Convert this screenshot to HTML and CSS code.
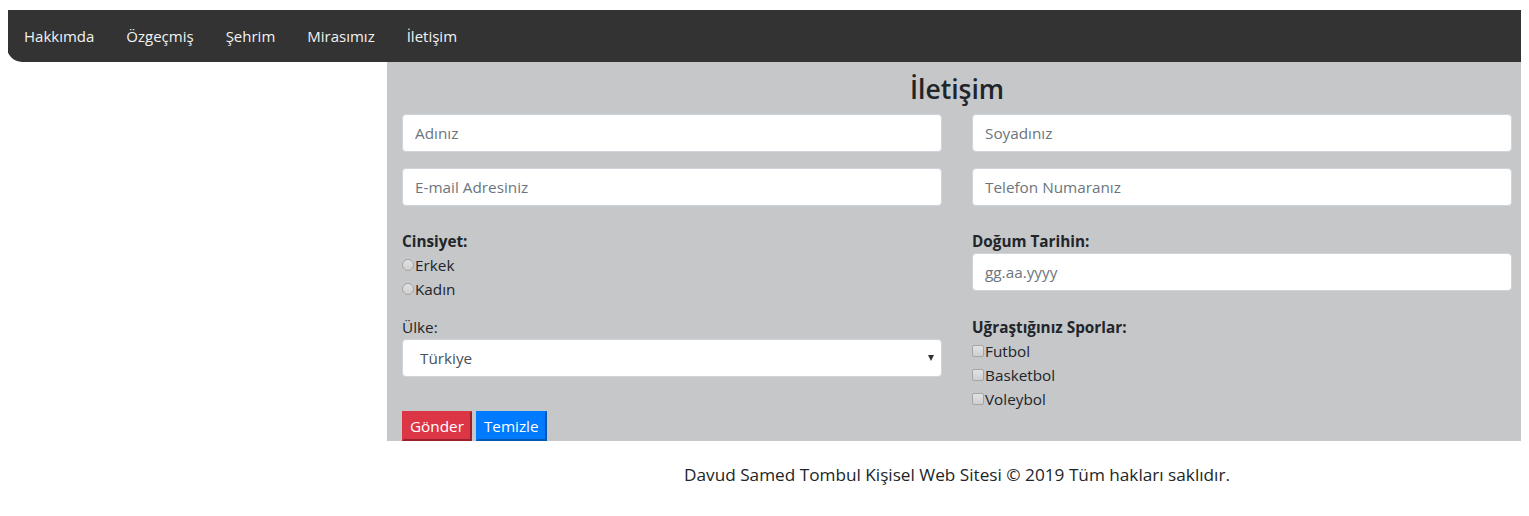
FILE: index.html
```html
<!DOCTYPE html>
<html lang="tr">
<head>
<meta charset="utf-8">
<title>İletişim</title>
<link rel="stylesheet" href="styles.css">
</head>
<body>
<nav class="topnav">
  <ul class="nav-list">
    <li><a href="#">Hakkımda</a></li>
    <li><a href="#">Özgeçmiş</a></li>
    <li><a href="#">Şehrim</a></li>
    <li><a href="#">Mirasımız</a></li>
    <li><a href="#">İletişim</a></li>
  </ul>
</nav>
<main class="container">
  <form class="panel">
    <h3 class="title">İletişim</h3>
    <div class="row row-inputs">
      <input class="field" type="text" placeholder="Adınız">
      <input class="field" type="text" placeholder="Soyadınız">
      <input class="field" type="text" placeholder="E-mail Adresiniz">
      <input class="field" type="text" placeholder="Telefon Numaranız">
    </div>
    <div class="row row-mid">
      <div class="group">
        <div class="label-bold">Cinsiyet:</div>
        <label class="opt"><input class="radio" type="radio" name="c">Erkek</label>
        <label class="opt"><input class="radio" type="radio" name="c">Kadın</label>
      </div>
      <div class="group">
        <div class="label-bold">Doğum Tarihin:</div>
        <input class="field" type="text" placeholder="gg.aa.yyyy">
      </div>
    </div>
    <div class="row row-low">
      <div class="group">
        <div class="label">Ülke:</div>
        <div class="select-wrap">
          <select class="select"><option>Türkiye</option></select>
        </div>
      </div>
      <div class="group">
        <div class="label-bold">Uğraştığınız Sporlar:</div>
        <label class="opt"><input class="check" type="checkbox">Futbol</label>
        <label class="opt"><input class="check" type="checkbox">Basketbol</label>
        <label class="opt"><input class="check" type="checkbox">Voleybol</label>
      </div>
    </div>
    <div class="buttons">
      <button class="btn btn-red" type="submit">Gönder</button>
      <button class="btn btn-blue" type="reset">Temizle</button>
    </div>
  </form>
  <footer class="footer">Davud Samed Tombul Kişisel Web Sitesi © 2019 Tüm hakları saklıdır.</footer>
</main>
</body>
</html>
```
FILE: styles.css
```css
* { box-sizing: border-box; }
html, body { overflow: hidden; }
body {
  margin: 8px;
  font-family: "Open Sans", "Liberation Sans", sans-serif;
  font-size: 15.3px;
  line-height: 24px;
  color: #212529;
  background: #fff;
}
.topnav {
  margin: 2px -8px 0 -1px;
  height: 52px;
  background: #333333;
  border-bottom-left-radius: 15px;
}
.nav-list {
  list-style: none;
  margin: 0;
  padding: 0 0 0 1px;
  display: flex;
}
.nav-list a {
  display: block;
  padding: 14px 16px;
  color: #f2f2f2;
  text-decoration: none;
  font-size: 15px;
  line-height: 24px;
}
.container {
  margin-left: 379px;
  width: 1140px;
}
.panel {
  background: #c6c7c9;
  padding: 11px 15px 0;
}
.title {
  margin: 0 0 7px;
  text-align: center;
  font-size: 26.5px;
  font-weight: 600;
  line-height: 33.6px;
  color: #212529;
}
.row {
  display: grid;
  grid-template-columns: 540px 540px;
  column-gap: 30px;
}
.row-inputs .field { margin-bottom: 16px; }
.row-mid { margin-top: 7px; }
.row-low { margin-top: 14px; }
.group { display: flex; flex-direction: column; align-items: flex-start; }
.field {
  display: block;
  width: 100%;
  height: 38px;
  padding: 6px 12px;
  font: inherit;
  line-height: 24px;
  color: #495057;
  background: #fff;
  border: 1px solid #ced4da;
  border-radius: 4px;
}
.field::placeholder { color: #6c757d; opacity: 1; }
.label-bold { font-weight: 700; }
.label { font-weight: 400; }
.opt { display: block; line-height: 24px; }
.radio, .check {
  -webkit-appearance: none;
  appearance: none;
  display: inline-block;
  width: 12px;
  height: 12px;
  margin: 0 1px 0 0;
  border: 1px solid #a5a5a5;
  background: linear-gradient(#e2e2e2, #cfcfcf);
  vertical-align: baseline;
}
.radio { border-radius: 50%; }
.check { border-radius: 2px; }
.select-wrap {
  position: relative;
  width: 100%;
}
.select-wrap::after {
  content: "";
  position: absolute;
  right: 8px;
  top: 16px;
  border-left: 3px solid transparent;
  border-right: 3px solid transparent;
  border-top: 6px solid #333;
  pointer-events: none;
}
.select {
  -webkit-appearance: none;
  appearance: none;
  display: block;
  width: 100%;
  height: 38px;
  padding: 6px 12px 6px 17px;
  font: inherit;
  color: #495057;
  background: #fff;
  border: 1px solid #ced4da;
  border-radius: 4px;
}
.buttons {
  display: flex;
  gap: 4px;
}
.btn {
  height: 30px;
  padding: 1px 6px;
  font: inherit;
  line-height: 24px;
  color: #fff;
  border: 2px solid;
  border-radius: 0;
  cursor: pointer;
}
.btn-red {
  background: #dc3545;
  border-color: #dc3545 #9b1f2c #9b1f2c #dc3545;
}
.btn-blue {
  background: #007bff;
  border-color: #007bff #0056b3 #0056b3 #007bff;
}
.footer {
  padding-top: 22px;
  text-align: center;
  font-size: 17.2px;
  line-height: 24px;
  color: #212529;
}
```
